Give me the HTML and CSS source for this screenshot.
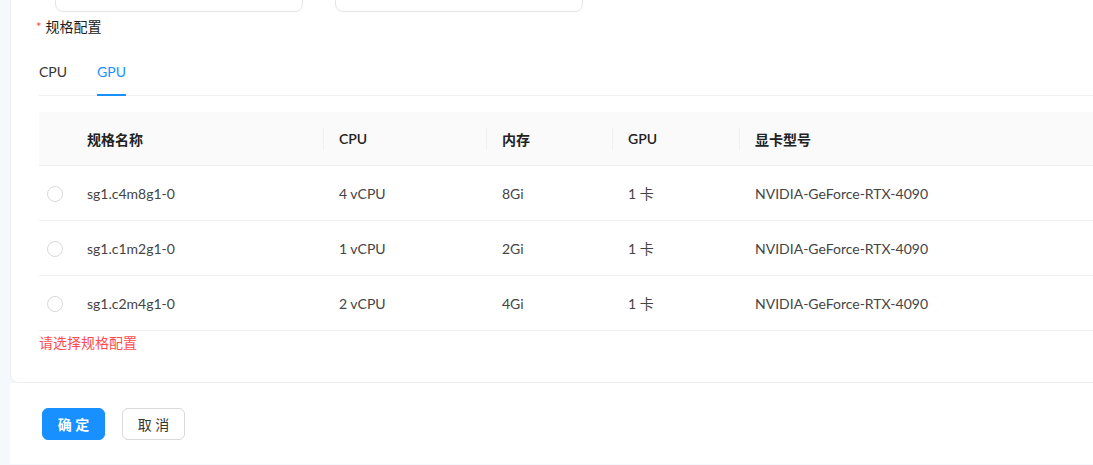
FILE: index.html
```html
<!DOCTYPE html>
<html lang="zh-CN">
<head>
    <meta charset="UTF-8">
    <meta name="viewport" content="width=device-width, initial-scale=1.0">
    <title>规格配置</title>
    <link rel="stylesheet" href="styles.css">
</head>
<body>
    <div class="page">
        <div class="card">
            <div class="top-fields">
                <div class="field-box"></div>
                <div class="field-box"></div>
            </div>

            <div class="field-label"><span class="required">*</span>规格配置</div>

            <div class="tabs">
                <div class="tab">CPU</div>
                <div class="tab active">GPU</div>
            </div>

            <table class="spec-table">
                <thead>
                    <tr>
                        <th class="col-select"></th>
                        <th class="col-name">规格名称</th>
                        <th class="col-cpu">CPU</th>
                        <th class="col-mem">内存</th>
                        <th class="col-gpu">GPU</th>
                        <th>显卡型号</th>
                    </tr>
                </thead>
                <tbody>
                    <tr>
                        <td class="col-select"><span class="radio"></span></td>
                        <td>sg1.c4m8g1-0</td>
                        <td>4 vCPU</td>
                        <td>8Gi</td>
                        <td>1 卡</td>
                        <td>NVIDIA-GeForce-RTX-4090</td>
                    </tr>
                    <tr>
                        <td class="col-select"><span class="radio"></span></td>
                        <td>sg1.c1m2g1-0</td>
                        <td>1 vCPU</td>
                        <td>2Gi</td>
                        <td>1 卡</td>
                        <td>NVIDIA-GeForce-RTX-4090</td>
                    </tr>
                    <tr>
                        <td class="col-select"><span class="radio"></span></td>
                        <td>sg1.c2m4g1-0</td>
                        <td>2 vCPU</td>
                        <td>4Gi</td>
                        <td>1 卡</td>
                        <td>NVIDIA-GeForce-RTX-4090</td>
                    </tr>
                </tbody>
            </table>

            <div class="error-text">请选择规格配置</div>
        </div>

        <div class="footer">
            <button class="btn btn-primary">确 定</button>
            <button class="btn">取 消</button>
        </div>
    </div>
</body>
</html>
```

FILE: styles.css
```css
body {
    margin: 0;
    background-color: #f5f8fc;
    font-family: Lato, "Noto Sans CJK SC", sans-serif;
    font-size: 14px;
    color: #333;
    overflow: hidden;
}
.page {
    padding-left: 10px;
}
.card {
    background-color: #fff;
    border: 1px solid #ebedf0;
    border-top: none;
    border-radius: 0 0 8px 8px;
    margin-right: -40px;
    padding: 0 0 28px 28px;
}

/* fields above, mostly scrolled out of view */
.top-fields {
    display: flex;
    align-items: flex-end;
    gap: 32px;
    height: 12px;
    padding-left: 16px;
    overflow: hidden;
}
.field-box {
    flex: none;
    width: 246px;
    height: 32px;
    border: 1px solid #e4e6ea;
    border-radius: 8px;
}

.field-label {
    height: 22px;
    margin-top: 4px;
    margin-left: -3px;
    line-height: 22px;
    color: #222;
}
.required {
    color: #ff4d4f;
    font-size: 13px;
    line-height: 1;
    margin-right: 4px;
}

/* tabs */
.tabs {
    display: flex;
    gap: 30px;
    margin-top: 11px;
    border-bottom: 1px solid #f0f0f0;
}
.tab {
    padding: 12px 0;
    line-height: 22px;
    color: #333;
    position: relative;
}
.tab.active {
    color: #1890ff;
}
.tab.active::after {
    content: "";
    position: absolute;
    left: 0;
    right: 0;
    bottom: -1px;
    height: 2px;
    background-color: #1890ff;
}

/* table */
.spec-table {
    width: 100%;
    margin-top: 16px;
    border-collapse: collapse;
    table-layout: fixed;
}
.spec-table th,
.spec-table td {
    text-align: left;
    padding: 0 16px;
    border-bottom: 1px solid #f0f0f0;
}
.spec-table th {
    height: 53px;
    background-color: #fafafa;
    font-weight: 600;
    color: #222;
    position: relative;
}
.spec-table th + th:not(.col-name)::before {
    content: "";
    position: absolute;
    left: 0;
    top: 50%;
    width: 1px;
    height: 1.6em;
    transform: translateY(-50%);
    background-color: #f0f0f0;
}
.spec-table td {
    height: 54px;
    color: #444;
}
.spec-table .col-select {
    width: 32px;
    padding: 0;
    text-align: center;
}
.col-name { width: 220px; }
.col-cpu { width: 131px; }
.col-mem { width: 94px; }
.col-gpu { width: 95px; }

.radio {
    display: inline-block;
    width: 14px;
    height: 14px;
    border: 1px solid #d9d9d9;
    border-radius: 50%;
    vertical-align: middle;
}

.error-text {
    color: #ff4d4f;
    line-height: 22px;
    padding-top: 1px;
}

/* footer buttons */
.footer {
    background-color: #fff;
    height: 81px;
    padding: 25px 0 0 32px;
    box-sizing: border-box;
    display: flex;
    gap: 17px;
    align-items: flex-start;
}
.btn {
    width: 63px;
    height: 32px;
    border: 1px solid #d9d9d9;
    border-radius: 6px;
    background-color: #fff;
    color: #333;
    font-family: inherit;
    font-size: 14px;
    cursor: pointer;
}
.btn-primary {
    background-color: #1890ff;
    border-color: #1890ff;
    color: #fff;
    font-weight: 600;
}
```
